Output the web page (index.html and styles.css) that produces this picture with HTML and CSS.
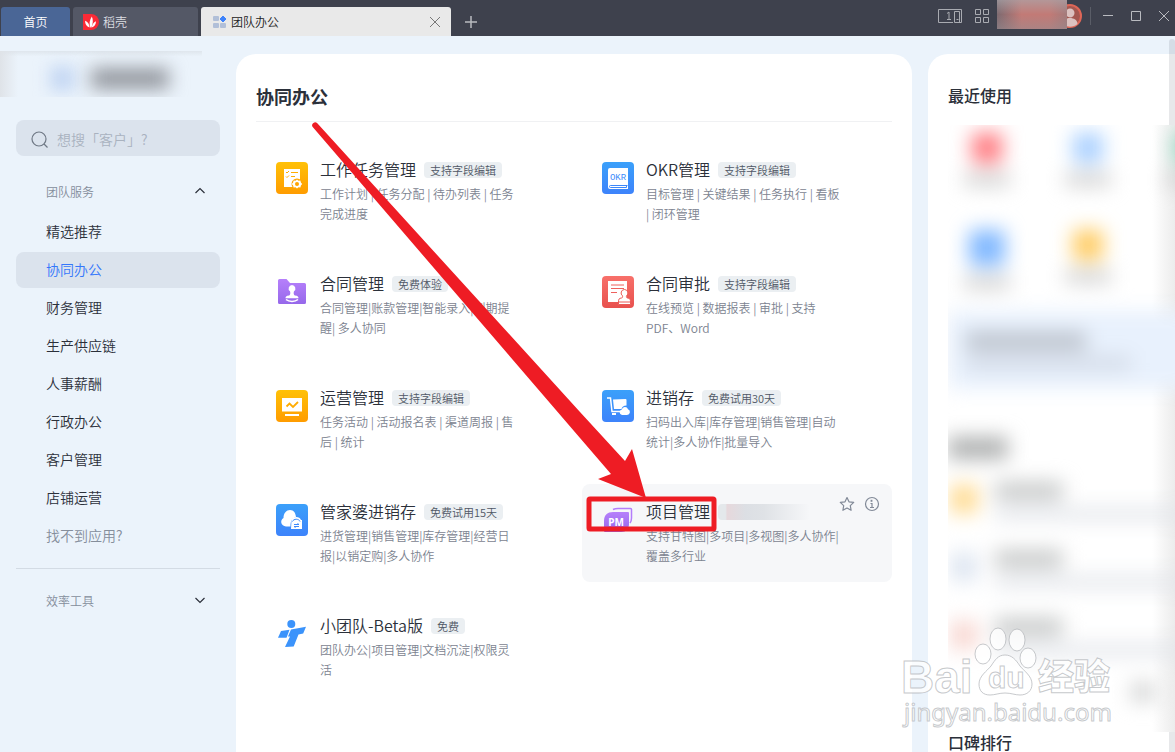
FILE: index.html
```html
<!DOCTYPE html>
<html lang="zh-CN">
<head>
    <meta charset="UTF-8">
    <meta name="viewport" content="width=device-width, initial-scale=1.0">
    <title>团队办公</title>
    <link rel="stylesheet" href="styles.css">
</head>
<body>
    <header class="tabbar">
        <a class="tab tab-home" href="#">首页</a>
        <a class="tab tab-docer" href="#">
            <svg width="16" height="16" viewBox="0 0 16 16">
                <path d="M0 0h8a8 8 0 0 1 0 16H0z" fill="#fa2a36"/>
                <path d="M7.400 13.500C6 10 6.500 6 8.800 2.500c1.600 3 1.200 7-.4 11z" fill="#fff"/>
                <path d="M6.600 13.500C3.500 12.500 2 10 2 6.800c2.800 1 4.500 3.500 4.600 6.700z" fill="#fff"/>
                <path d="M8.800 13.500c.3-3 1.600-5 4.200-6.200-.1 3.200-1.400 5.300-4.200 6.200z" fill="#fff"/>
            </svg>
            <span>稻壳</span>
        </a>
        <div class="tab tab-active">
            <svg width="14" height="14" viewBox="0 0 14 14">
                <rect x="0" y="1" width="6" height="5" rx="1" fill="#b1bfd8"/>
                <rect x="0" y="8" width="6" height="5" rx="1" fill="#b1bfd8"/>
                <rect x="7" y="8" width="6" height="5" rx="1" fill="#b1bfd8"/>
                <path d="M10 1l3 3-3 3-3-3z" fill="#3f83fb" stroke="#3f83fb" stroke-linejoin="round"/>
            </svg>
            <span>团队办公</span>
            <button class="icon-btn tab-close" aria-label="关闭标签">
                <svg width="12" height="12" viewBox="0 0 12 12"><path d="M1 1l10 10M11 1L1 11" stroke="#777"/></svg>
            </button>
        </div>
        <button class="icon-btn tab-add" aria-label="新建标签">
            <svg width="12" height="12" viewBox="0 0 12 12"><path d="M6 0v12M0 6h12" stroke="#b9bbc0" stroke-width="1.500"/></svg>
        </button>
        <div class="window-tools">
            <button class="icon-btn" aria-label="窗口模式">
                <svg width="24" height="14" viewBox="0 0 24 14" fill="none" stroke="#a9abb1">
                    <path d="M15 13.500H.500V.500h23v13H16.500v-11h5v11"/>
                    <path d="M9 4.500l2-1.500v7.500M9 10.500h4M18.500 10.500h2"/>
                </svg>
            </button>
            <button class="icon-btn" aria-label="应用">
                <svg width="14" height="14" viewBox="0 0 14 14" fill="none" stroke="#a9abb1">
                    <path d="M.500.500h5v5h-5zM8.500.500h5v5h-5zM.500 8.500h5v5h-5zM8.500 8.500h5v5h-5z"/>
                </svg>
            </button>
            <div class="account">
                <div class="account-name"></div>
                <svg class="avatar" width="15" height="24" viewBox="9 0 15 24">
                    <circle cx="12" cy="12" r="11" fill="#a45850" stroke="#de6657" stroke-width="2"/>
                    <circle cx="12" cy="9" r="4.500" fill="#dcc2c0"/>
                    <path d="M4.500 20c0-8 15-8 15 0-4 3.500-11 3.500-15 0z" fill="#dcc2c0"/>
                </svg>
            </div>
            <div class="tool-line"></div>
            <button class="icon-btn" aria-label="最小化">
                <svg width="10" height="10" viewBox="0 0 10 10"><path d="M0 4.500h10" stroke="#b9bbc0"/></svg>
            </button>
            <button class="icon-btn" aria-label="最大化">
                <svg width="10" height="10" viewBox="0 0 10 10"><path d="M.500.500h9v9h-9z" fill="none" stroke="#b9bbc0"/></svg>
            </button>
            <button class="icon-btn" aria-label="关闭">
                <svg width="10" height="10" viewBox="0 0 10 10"><path d="M0 0l10 10M10 0L0 10" stroke="#b9bbc0"/></svg>
            </button>
        </div>
    </header>

    <div class="page">
        <aside class="sidebar">
            <div class="brand">
                <span class="brand-logo"></span>
                <span class="brand-name"></span>
            </div>
            <label class="search">
                <svg width="18" height="18" viewBox="0 0 18 18" fill="none" stroke="#6f7885" stroke-width="1.200">
                    <circle cx="8" cy="8" r="7"/><path d="M13 13l3.500 3.500"/>
                </svg>
                <input type="text" placeholder="想搜「客户」?" aria-label="搜索">
            </label>
            <button class="group-title">
                <span>团队服务</span>
                <svg width="12" height="12" viewBox="0 0 12 12"><path d="M1.500 8L6 3.500 10.500 8" fill="none" stroke="#2b303a" stroke-width="1.200"/></svg>
            </button>
            <nav class="menu">
                <a href="#">精选推荐</a>
                <a href="#" class="current">协同办公</a>
                <a href="#">财务管理</a>
                <a href="#">生产供应链</a>
                <a href="#">人事薪酬</a>
                <a href="#">行政办公</a>
                <a href="#">客户管理</a>
                <a href="#">店铺运营</a>
                <a href="#" class="muted">找不到应用?</a>
            </nav>
            <button class="group-title group-tools">
                <span>效率工具</span>
                <svg width="12" height="12" viewBox="0 0 12 12"><path d="M1.500 4L6 8.500 10.500 4" fill="none" stroke="#2b303a" stroke-width="1.200"/></svg>
            </button>
        </aside>

        <main class="panel">
            <h1>协同办公</h1>
            <div class="apps">
                <article class="app">
                    <svg class="app-icon" viewBox="0 0 32 32">
                        <defs>
                            <linearGradient id="gold" x2="0" y2="1"><stop stop-color="#ffc107"/><stop offset="1" stop-color="#ff9c00"/></linearGradient>
                            <linearGradient id="blue" x2="0" y2="1"><stop stop-color="#3ba0fa"/><stop offset="1" stop-color="#3d83fb"/></linearGradient>
                            <linearGradient id="red" x2="0" y2="1"><stop stop-color="#f8706a"/><stop offset="1" stop-color="#e8514e"/></linearGradient>
                            <linearGradient id="purple" x2="0" y2="1"><stop stop-color="#b680fb"/><stop offset="1" stop-color="#9668ea"/></linearGradient>
                        </defs>
                        <rect width="32" height="32" rx="4" fill="url(#gold)"/>
                        <path d="M8 7h16v18H8z" fill="#fff"/>
                        <path d="M10 10l1 1 2-2M10 14.500l1 1 2-2M15 10.500h7M15 14.500h4" fill="none" stroke="#ffae02"/>
                        <circle cx="21" cy="22" r="5.500" fill="#ffa401"/>
                        <path d="M21 17.500l1.500 1.200 1.900-.1.500 1.900 1.300 1.500-1.300 1.500-.5 1.900-1.900-.1L21 26.500l-1.500-1.200-1.900.1-.5-1.900-1.300-1.500 1.300-1.500.5-1.900 1.900.1z" fill="#fff"/>
                        <circle cx="21" cy="22" r="2" fill="#ffa401"/>
                    </svg>
                    <div class="app-text">
                        <h2><a href="#">工作任务管理</a><span class="badge">支持字段编辑</span></h2>
                        <p>工作计划 | 任务分配 | 待办列表 | 任务<br>完成进度</p>
                    </div>
                </article>
                <article class="app">
                    <svg class="app-icon" viewBox="0 0 32 32">
                        <rect width="32" height="32" rx="4" fill="url(#blue)"/>
                        <path d="M8 6h18v21H8a2 2 0 0 1-2-2V8a2 2 0 0 1 2-2z" fill="#fff"/>
                        <path d="M25.500 23.500H8.500a1 1 0 0 0 0 2H24.500v-2" fill="none" stroke="#3d88fb"/>
                        <text class="okr" x="16" y="18" text-anchor="middle">OKR</text>
                    </svg>
                    <div class="app-text">
                        <h2><a href="#">OKR管理</a><span class="badge">支持字段编辑</span></h2>
                        <p>目标管理 | 关键结果 | 任务执行 | 看板<br>| 闭环管理</p>
                    </div>
                </article>
                <article class="app">
                    <svg class="app-icon" viewBox="0 0 32 32">
                        <path d="M2 4.500A1.500 1.500 0 0 1 3.500 3h7L14 7h14.500A1.500 1.500 0 0 1 30 8.500v18a1.500 1.500 0 0 1-1.500 1.500h-25A1.500 1.500 0 0 1 2 26.500z" fill="url(#purple)"/>
                        <path d="M16 9a3.500 3.500 0 0 1 2 6.300c-.6 1.700-.4 3.700.8 4.200 3.200.3 3.700 1.200 3.700 2.700h-13c0-1.500.5-2.400 3.700-2.700 1.200-.5 1.400-2.500.8-4.200A3.500 3.500 0 0 1 16 9z" fill="#fff"/>
                        <path d="M10 23.500c3 2.600 9 2.600 12 0" fill="none" stroke="#fff" stroke-width="1.500"/>
                    </svg>
                    <div class="app-text">
                        <h2><a href="#">合同管理</a><span class="badge">免费体验</span></h2>
                        <p>合同管理|账款管理|智能录入|到期提醒| 多人协同</p>
                    </div>
                </article>
                <article class="app">
                    <svg class="app-icon" viewBox="0 0 32 32">
                        <rect width="32" height="32" rx="4" fill="url(#red)"/>
                        <path d="M6 5h19v21H6z" fill="#fff"/>
                        <path d="M9 9h13M9 12.500h13M9 16.500h6" stroke="#ee605c"/>
                        <path d="M22.500 13.500a3.500 3.500 0 0 1 2 6.300c-.3 1.500 0 2 1 2.200 2.500.2 3 1.200 3 4v2.500H16.500V26c0-2.800.5-3.800 3-4 1-.2 1.300-.7 1-2.200a3.500 3.500 0 0 1 2-6.300z" fill="#fff" stroke="#ec5a57"/>
                        <path d="M18 27.500h9" stroke="#fff"/>
                        <path d="M17 26h11" stroke="#ec5a57"/>
                    </svg>
                    <div class="app-text">
                        <h2><a href="#">合同审批</a><span class="badge">支持字段编辑</span></h2>
                        <p>在线预览 | 数据报表 | 审批 | 支持<br>PDF、Word</p>
                    </div>
                </article>
                <article class="app">
                    <svg class="app-icon" viewBox="0 0 32 32">
                        <rect width="32" height="32" rx="4" fill="url(#gold)"/>
                        <path d="M6 8h20v13.500H6zM9 24h14v2H9z" fill="#fff"/>
                        <path d="M10.500 16.500l3-3 3.500 3.500 5-5" fill="none" stroke="#ffac02" stroke-width="1.800"/>
                    </svg>
                    <div class="app-text">
                        <h2><a href="#">运营管理</a><span class="badge">支持字段编辑</span></h2>
                        <p>任务活动 | 活动报名表 | 渠道周报 | 售<br>后 | 统计</p>
                    </div>
                </article>
                <article class="app">
                    <svg class="app-icon" viewBox="0 0 32 32">
                        <rect width="32" height="32" rx="4" fill="url(#blue)"/>
                        <path d="M5 8h3.500L10 21.500h8" fill="none" stroke="#fff" stroke-width="1.500"/>
                        <path d="M11 9.500L23.500 9a1 1 0 0 1 1 1v5.500c-3 0-4.500 1.500-5 3.500H12z" fill="#fff"/>
                        <path d="M10 23h4v2h-4z" fill="#fff"/>
                        <path d="M20 25a2.800 2.800 0 0 1-.2-5.500 3.200 3.200 0 0 1 6.200-.3A3 3 0 0 1 25 25z" fill="#fff"/>
                    </svg>
                    <div class="app-text">
                        <h2><a href="#">进销存</a><span class="badge">免费试用30天</span></h2>
                        <p>扫码出入库|库存管理|销售管理|自动统计|多人协作|批量导入</p>
                    </div>
                </article>
                <article class="app">
                    <svg class="app-icon" viewBox="0 0 32 32">
                        <rect width="32" height="32" rx="4" fill="url(#blue)"/>
                        <path d="M10 22.500C5 22 3.500 16.500 7.500 14c0-5 3-8 6.500-8 4 0 5.500 3 6 7-4 1-5.500 4-5.500 9.500z" fill="#fff"/>
                        <path d="M15.500 16c1-4 8.500-4 9.500 0h1v9H15z" fill="#fff"/>
                        <path d="M16.500 17.500c1-3 6.500-3 7.500 0" fill="none" stroke="#3d8afb"/>
                        <path d="M18 20.500h5l-1.500-1M23 22.500h-5l1.500 1" fill="none" stroke="#3d8afb"/>
                    </svg>
                    <div class="app-text">
                        <h2><a href="#">管家婆进销存</a><span class="badge">免费试用15天</span></h2>
                        <p>进货管理|销售管理|库存管理|经营日报|以销定购|多人协作</p>
                    </div>
                </article>
                <article class="app app-hover">
                    <svg class="app-icon" viewBox="0 0 32 32">
                        <path d="M11 5.500c1.500-.7 3-1 5-1h12.500a1 1 0 0 1 1 1V14c0 2.500-.5 3.800-1.500 5" fill="none" stroke="#b47dfb" stroke-width="1.500"/>
                        <path d="M11 8h15a1 1 0 0 1 1 1v11c0 5-3 8-8 8H3a1 1 0 0 1-1-1V17c0-6 3.500-9 9-9z" fill="url(#purple)"/>
                        <text class="pm" x="14" y="22" text-anchor="middle">PM</text>
                    </svg>
                    <div class="app-text">
                        <h2><a href="#">项目管理</a><span class="badge badge-smudge"></span></h2>
                        <p>支持甘特图|多项目|多视图|多人协作|覆盖多行业</p>
                    </div>
                    <div class="app-actions">
                        <button class="icon-btn" aria-label="收藏">
                            <svg width="16" height="16" viewBox="0 0 16 16"><path d="M8 1.500l2 4.300 4.700.6-3.400 3.200.8 4.700L8 12l-4.100 2.300.8-4.700L1.300 6.400 6 5.800z" fill="none" stroke="#818997" stroke-width="1.200" stroke-linejoin="round"/></svg>
                        </button>
                        <button class="icon-btn" aria-label="详情">
                            <svg width="16" height="16" viewBox="0 0 16 16" fill="none" stroke="#818997" stroke-width="1.200">
                                <circle cx="8" cy="8" r="6.500"/><path d="M6.500 7.500H8V11M6 11.500h4"/><path d="M7.500 3.800v2" stroke-width="1.800"/>
                            </svg>
                        </button>
                    </div>
                </article>
                <article class="app">
                    <svg class="app-icon" viewBox="0 0 32 32" fill="#3b93fb">
                        <circle cx="15.300" cy="6" r="4"/>
                        <path d="M5 13l8.500-1.200-3 8L2 19.800z"/>
                        <path d="M15 11.500L30 8.700l-2.800 6.800-4.700 1L17.700 28.500 9 29l5-10.500h-2z"/>
                    </svg>
                    <div class="app-text">
                        <h2><a href="#">小团队-Beta版</a><span class="badge">免费</span></h2>
                        <p>团队办公|项目管理|文档沉淀|权限灵活</p>
                    </div>
                </article>
            </div>
        </main>

        <aside class="recent">
            <h3>最近使用</h3>
            <div class="veil">
                <div class="veil-inner">
                    <div class="tiles">
                        <div class="tile tile-red"><i></i><b></b></div>
                        <div class="tile tile-sky"><i></i><b></b></div>
                        <div class="tile tile-green"><i></i><b></b></div>
                        <div class="tile tile-blue"><i></i><b></b></div>
                        <div class="tile tile-gold"><i></i><b></b></div>
                    </div>
                    <div class="promo"><b></b><i></i></div>
                    <div class="veil-title"></div>
                    <div class="row row-gold"><i></i><div><b></b><u></u></div></div>
                    <div class="row row-gray"><i></i><div><b></b><u></u></div></div>
                    <div class="row row-red"><i></i><div><b></b><u></u></div></div>
                    <div class="more"></div>
                </div>
            </div>
            <h3 class="rank">口碑排行</h3>
        </aside>
        <div class="scrollbar"></div>
    </div>

    <svg class="mark" width="470" height="420" viewBox="300 115 470 420">
        <path d="M312.500 126.800a3 3 0 0 1 4.800-3.500L580 412l45 49 7-12 14 49-48-19 13-5-31-36z" fill="#ee1c24"/>
        <rect x="589" y="499" width="125" height="30" rx="1" fill="none" stroke="#ee1c24" stroke-width="5"/>
    </svg>

    <svg class="watermark" width="220" height="110" viewBox="0 0 220 110">
        <g class="wm-shape">
            <text class="wm-latin" x="8" y="72">Bai</text>
            <ellipse cx="90" cy="33" rx="8" ry="10"/>
            <ellipse cx="105" cy="18" rx="8" ry="11"/>
            <ellipse cx="124" cy="19" rx="8" ry="11"/>
            <ellipse cx="135" cy="37" rx="8" ry="10"/>
            <path d="M112 34c7 0 11 5 15 11 4 5 12 10 12 18 0 7-5 11-12 11-5 0-9-2-15-2s-10 2-15 2c-7 0-11-4-11-11 0-8 8-13 12-18 4-6 7-11 14-11z"/>
            <text class="wm-du" x="95" y="67">du</text>
            <text class="wm-han" x="145" y="69">经验</text>
            <text class="wm-url" x="11" y="100">jingyan.baidu.com</text>
        </g>
    </svg>
</body>
</html>
```

FILE: styles.css
```css
* {
    box-sizing: border-box;
}
body {
    position: relative;
    display: flex;
    flex-direction: column;
    height: 100vh;
    margin: 0;
    overflow: hidden;
    background-color: #ebf3fb;
    color: #2b303a;
    font-family: "Noto Sans CJK SC", "Noto Sans", sans-serif;
    font-size: 14px;
    font-weight: 350;
}
a {
    color: inherit;
    text-decoration: none;
}
h1, h2, h3, p {
    margin: 0;
}
button {
    font-family: inherit;
    font-weight: inherit;
    background: none;
    border: 0;
    padding: 0;
    cursor: pointer;
}
svg {
    display: block;
    flex: none;
}
.icon-btn {
    display: block;
    flex: none;
}

/* top bar */
.tabbar {
    display: flex;
    flex: none;
    align-items: flex-end;
    gap: 3px;
    height: 36px;
    padding-left: 1px;
    background-color: #3e414d;
    font-size: 12px;
}
.tab {
    display: flex;
    align-items: center;
    height: 29px;
    border-radius: 3px 3px 0 0;
    color: #dcdee3;
}
.tab-home {
    width: 69px;
    justify-content: center;
    background-color: #4a6696;
    color: #fff;
}
.tab-docer {
    width: 125px;
    gap: 4px;
    padding-left: 10px;
    background-color: #545866;
}
.tab-active {
    width: 250px;
    gap: 4px;
    padding: 0 10px 0 12px;
    background-color: #e9e9e9;
    color: #222;
}
.tab-close {
    margin-left: auto;
}
.tab-add {
    margin-left: 11px;
    padding-bottom: 8px;
}
.window-tools {
    display: flex;
    align-items: center;
    height: 32px;
    margin-left: auto;
    padding-right: 6px;
    align-self: flex-start;
    gap: 18px;
}
.window-tools .icon-btn:first-child {
    margin-right: -5px;
}
.account {
    display: flex;
    align-items: center;
    height: 32px;
    margin: 0 -10px;
}
.account-name {
    width: 70px;
    height: 29px;
    align-self: flex-start;
    background: linear-gradient(rgba(170, 170, 175, .6), rgba(190, 120, 115, 0) 50%, rgba(150, 140, 145, .5)), linear-gradient(90deg, #7d6a70, #c27a76 35%, #c27a76 75%, #a37a7a);
}
.tool-line {
    width: 1px;
    height: 18px;
    background-color: #5a5d67;
    margin-right: -6px;
}

/* columns */
.page {
    position: relative;
    display: flex;
    flex: 1;
    min-height: 0;
    gap: 16px;
}
.sidebar {
    width: 220px;
    flex: none;
    padding: 15px 0 0 16px;
}
.brand {
    display: flex;
    align-items: center;
    gap: 16px;
    height: 46px;
    width: 202px;
    margin-left: -16px;
    padding: 8px 0 0 50px;
    overflow: hidden;
    background: linear-gradient(90deg, #dfe3e8, rgba(235, 243, 251, 0) 9%), linear-gradient(#dfe6ed, #ebf3fb 12%);
}
.brand-logo {
    width: 25px;
    height: 25px;
    background-color: #c4d7f3;
    filter: blur(8px);
}
.brand-name {
    width: 78px;
    height: 21px;
    background-color: #93979e;
    filter: blur(9px);
}
.search {
    display: flex;
    align-items: center;
    gap: 8px;
    height: 36px;
    margin-top: 23px;
    padding: 4px 15px 0;
    border-radius: 8px;
    background-color: #dbe3ed;
}
.search input {
    width: 100%;
    min-width: 0;
    height: 28px;
    margin-bottom: 2px;
    padding: 0;
    border: 0;
    outline: 0;
    background: none;
    font: inherit;
}
.search input::placeholder {
    color: #a9b2bf;
    opacity: 1;
}
.group-title {
    display: flex;
    align-items: center;
    justify-content: space-between;
    width: 100%;
    height: 58px;
    padding: 12px 14px 0 30px;
    color: #858e9b;
    font-size: 12px;
}
.menu {
    display: flex;
    flex-direction: column;
    gap: 2px;
    padding-bottom: 14px;
    border-bottom: 1px solid #d3dbe4;
}
.menu a {
    height: 36px;
    padding-left: 30px;
    border-radius: 8px;
    line-height: 34px;
}
.menu .current {
    background-color: #dbe3ed;
    color: #3577fb;
}
.menu .muted {
    color: #858e9b;
}
.group-tools {
    padding-top: 4px;
}

/* app list */
.panel {
    flex: 1;
    min-width: 0;
    margin-top: 18px;
    padding: 20px 20px 0;
    border-radius: 20px 20px 0 0;
    background-color: #fff;
}
.panel h1 {
    height: 48px;
    border-bottom: 1px solid #f0f1f3;
    font-size: 18px;
    font-weight: bold;
    line-height: 44px;
}
.apps {
    display: grid;
    grid-template-columns: 1fr 1fr;
    gap: 16px;
    padding-top: 20px;
}
.app {
    position: relative;
    display: flex;
    gap: 12px;
    padding: 16px 20px;
    border-radius: 8px;
}
.app-hover {
    background-color: #f6f7f9;
}
.app-icon {
    width: 32px;
    height: 32px;
    margin-top: 4px;
}
.app h2 {
    display: flex;
    align-items: center;
    gap: 8px;
    height: 24px;
    font-size: 16px;
    font-weight: inherit;
    line-height: 22px;
    white-space: nowrap;
}
.app h2 a {
    height: 24px;
}
.app p {
    width: 200px;
    margin-top: 2px;
    color: #7c8390;
    font-size: 12px;
    line-height: 20px;
}
.badge {
    height: 16px;
    padding: 0 6px;
    border-radius: 4px;
    background-color: #ebeff2;
    color: #4f5765;
    font-size: 11px;
    line-height: 16px;
}
.badge-smudge {
    width: 92px;
    background: linear-gradient(90deg, #e4e8eb 8%, #e6d8dc 10%, #dcdfe4 30%, #dfe2e6 50%, #f6f7f9);
}
.app-actions {
    position: absolute;
    top: 12px;
    right: 12px;
    display: flex;
    gap: 9px;
}
.okr {
    font: 9px "Liberation Mono", monospace;
    fill: #3d8dfb;
}
.pm {
    font: bold 10px "Noto Sans", sans-serif;
    fill: #fff;
}

/* right column */
.recent {
    display: flex;
    flex-direction: column;
    width: 247px;
    flex: none;
    margin-top: 18px;
    padding: 20px 0 0 20px;
    border-radius: 20px 0 0 0;
    background-color: #fff;
}
.recent h3 {
    flex: none;
    height: 51px;
    font-size: 16px;
    font-weight: 500;
    line-height: 42px;
}
.recent .rank {
    height: 24px;
    line-height: 20px;
}
.veil {
    position: relative;
    z-index: 1;
    flex: none;
    height: 607px;
    overflow: hidden;
    background: linear-gradient(90deg, #fff 90%, #ececec);
}
.veil-inner {
    filter: blur(10px);
}
.tiles {
    display: grid;
    grid-template-columns: repeat(3, 78px);
    gap: 23px;
    height: 186px;
    padding-top: 8px;
    align-content: start;
}
.tile {
    display: flex;
    flex-direction: column;
    align-items: center;
    gap: 10px;
    height: 74px;
}
.tile i {
    width: 30px;
    height: 30px;
}
.tile b {
    width: 46px;
    height: 13px;
    background-color: #d0d0d0;
}
.tile-red i {
    background-color: #ff7a80;
}
.tile-sky i {
    background-color: #a9d0ff;
}
.tile-green i {
    background-color: #96d8c2;
}
.tile-blue i {
    width: 36px;
    height: 36px;
    background-color: #80b8ff;
}
.tile-gold i {
    background-color: #ffcb60;
}
.promo {
    height: 78px;
    margin-right: -20px;
    padding: 22px 18px;
    background-color: #e8f1fd;
}
.promo b {
    display: block;
    width: 120px;
    height: 16px;
    background-color: #b6bcc5;
}
.promo i {
    display: block;
    width: 165px;
    height: 12px;
    margin-top: 8px;
    background-color: #d0d7e3;
}
.veil-title {
    width: 60px;
    height: 22px;
    margin: 48px 0 14px;
    background-color: #adafaf;
}
.row {
    display: flex;
    gap: 18px;
    height: 68px;
    padding-left: 3px;
}
.row > i {
    width: 26px;
    height: 28px;
    margin-top: 12px;
}
.row div {
    flex: 1;
}
.row b {
    display: block;
    width: 68px;
    height: 18px;
    margin-top: 9px;
    background-color: #c6c8c8;
}
.row u {
    display: block;
    height: 12px;
    margin: 8px -20px 0 0;
    background-color: #e2e5ea;
}
.row-gold > i {
    background-color: #ffd98c;
}
.row-gray > i {
    background-color: #dce4f0;
}
.row-red > i {
    background-color: #f8d6d0;
}
.more {
    width: 24px;
    height: 20px;
    margin: 5px 0 0 183px;
    background-color: #d4d5d5;
}
.scrollbar {
    position: absolute;
    top: 3px;
    right: 0;
    bottom: 0;
    width: 6px;
    border-radius: 3px 3px 0 0;
    background-color: rgba(20, 25, 45, .1);
}

/* arrow and watermark over the page */
.mark {
    position: absolute;
    left: 300px;
    top: 115px;
    pointer-events: none;
}
.watermark {
    position: absolute;
    z-index: 2;
    right: 62px;
    bottom: 21px;
    overflow: visible;
    pointer-events: none;
}
.wm-shape {
    fill: #fff;
    fill-opacity: .8;
    stroke: #b4b7bb;
    stroke-opacity: .75;
    stroke-width: 1px;
}
.wm-latin {
    font: bold 46px "Liberation Sans", sans-serif;
}
.wm-du {
    font: bold 30px "Liberation Sans", sans-serif;
}
.wm-han {
    font: 900 36px "Noto Sans CJK SC", sans-serif;
}
.wm-url {
    font: 24px "Noto Sans", sans-serif;
}
```
